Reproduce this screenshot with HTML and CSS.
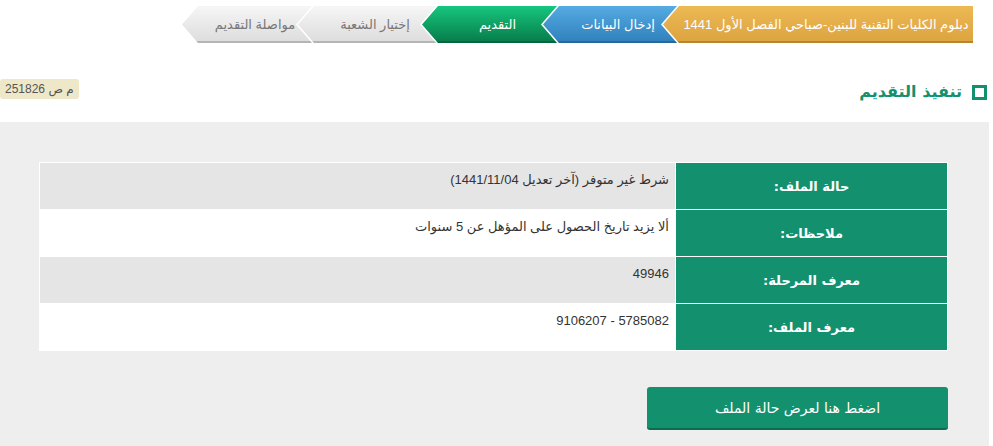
FILE: index.html
```html
<!DOCTYPE html>
<html lang="ar" dir="rtl">
<head>
	<meta charset="UTF-8" />
	<title>تنفيذ التقديم</title>
	<link rel="stylesheet" href="styles.css">
</head>
<body>
	<!--steps-->
	<div class="steps">
		<div class="step gold first">دبلوم الكليات التقنية للبنين-صباحي الفصل الأول 1441</div>
		<div class="step blue">إدخال البيانات</div>
		<div class="step green">التقديم</div>
		<div class="step gray">إختيار الشعبة</div>
		<div class="step gray">مواصلة التقديم</div>
	</div>

	<!--title row-->
	<div class="title-row">
		<h2 class="title"><span class="box"></span>تنفيذ التقديم</h2>
		<span class="badge">م ص 251826</span>
	</div>

	<!--panel-->
	<div class="panel">
		<table class="info">
			<tbody>
				<tr class="odd">
					<th>حالة الملف:</th>
					<td>شرط غير متوفر (آخر تعديل 1441/11/04)</td>
				</tr>
				<tr>
					<th>ملاحظات:</th>
					<td>ألا يزيد تاريخ الحصول على المؤهل عن 5 سنوات</td>
				</tr>
				<tr class="odd">
					<th>معرف المرحلة:</th>
					<td>49946</td>
				</tr>
				<tr>
					<th>معرف الملف:</th>
					<td>5785082 - 9106207</td>
				</tr>
			</tbody>
		</table>
		<div class="actions">
			<button class="btn">اضغط هنا لعرض حالة الملف</button>
		</div>
	</div>
</body>
</html>
```

FILE: styles.css
```css
body {
	margin: 0 auto 0 0;
	background: #fff;
	font-family: "Liberation Sans", "DejaVu Sans", sans-serif;
	font-size: 13px;
	color: #333;
	width: 989px;
}
.steps {
	display: flex;
	padding-top: 6px;
	padding-right: 16px;
	height: 37px;
}
.step {
	height: 37px;
	line-height: 37px;
	padding-left: 16px;
	box-sizing: border-box;
	text-align: center;
	font-size: 13px;
	color: #fff;
	white-space: nowrap;
	margin-right: -14px;
	clip-path: polygon(16px 0, 100% 0, calc(100% - 16px) 50%, 100% 100%, 16px 100%, 0 50%);
	box-shadow: inset 0 -2px 0 rgba(0,0,0,0.18);
}
.step.first {
	margin-right: 0;
	clip-path: polygon(16px 0, 100% 0, 100% 100%, 16px 100%, 0 50%);
}
.gold {
	width: 310px;
	background: linear-gradient(#ecb955, #dca33f);
}
.blue {
	width: 134px;
	background: linear-gradient(#55abe2, #2f7fbb);
}
.green {
	width: 135px;
	background: linear-gradient(#16c67e, #077a49);
}
.gray {
	width: 138px;
	color: #777;
	background: linear-gradient(#f6f6f6, #dcdcdc);
}
.gray:last-child {
	width: 130px;
}
.title-row {
	display: flex;
	justify-content: space-between;
	align-items: flex-start;
	height: 79px;
	box-sizing: border-box;
	padding-top: 36px;
}
.title {
	margin: 0;
	margin-right: 2px;
	display: flex;
	align-items: center;
	font-family: "DejaVu Sans", sans-serif;
	font-size: 16px;
	font-weight: bold;
	color: #13916f;
	line-height: 22px;
	padding-top: 2px;
}
.box {
	display: inline-block;
	width: 9px;
	height: 9px;
	border: 3px solid #13916f;
	margin-left: 10px;
}
.badge {
	background: #eee8c9;
	color: #555;
	font-size: 12px;
	padding: 3px 5px;
	border-radius: 3px;
	line-height: 14px;
}
.panel {
	background: #eeeeee;
	padding: 40px 41px 40px 39px;
	height: 324px;
	box-sizing: border-box;
}
.info {
	width: 100%;
	border-collapse: separate;
	border-spacing: 1px;
	background: #fff;
}
.info th {
	width: 271px;
	height: 46px;
	background: #13916f;
	color: #fff;
	font-family: "DejaVu Sans", sans-serif;
	font-size: 13px;
	font-weight: bold;
	text-align: center;
	vertical-align: middle;
	padding: 0;
}
.info td {
	background: #fff;
	text-align: right;
	vertical-align: top;
	padding: 9px 6px 0;
	font-size: 13px;
	color: #333;
}
.info tr.odd td {
	background: #e5e5e5;
}
.actions {
	margin-top: 36px;
	display: flex;
}
.btn {
	width: 301px;
	height: 43px;
	background: #13916f;
	color: #fff;
	border: 0;
	border-bottom: 2px solid #0c6b50;
	border-radius: 3px;
	font-family: "DejaVu Sans", sans-serif;
	font-size: 14px;
	cursor: pointer;
}
```
